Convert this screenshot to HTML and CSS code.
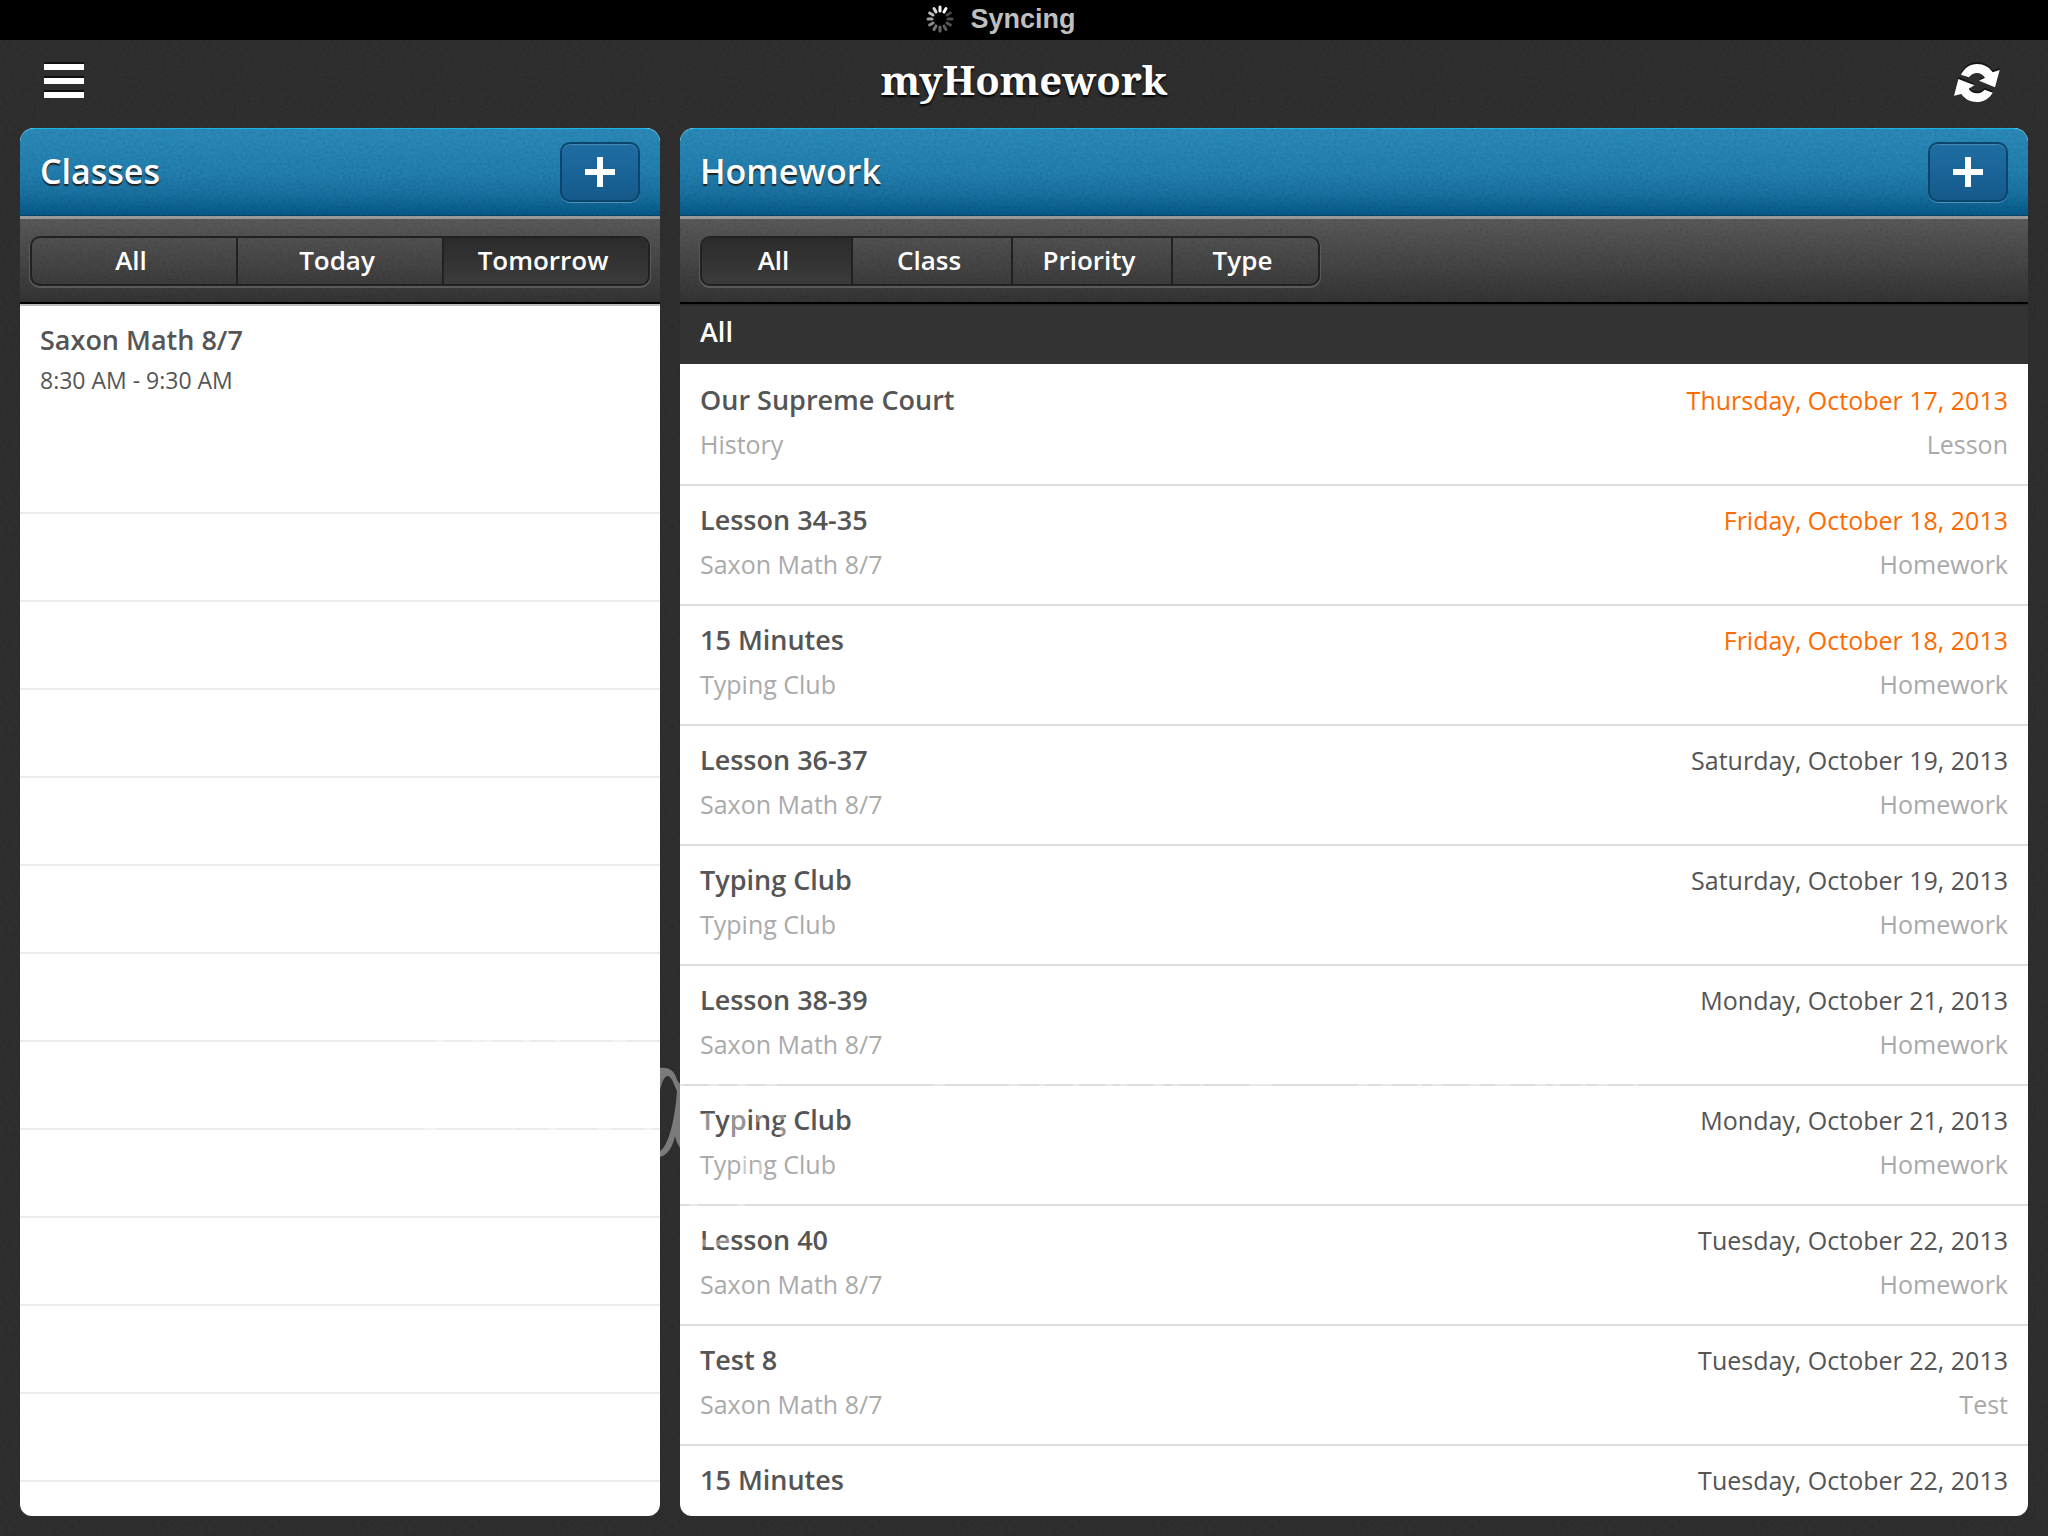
FILE: index.html
```html
<!DOCTYPE html>
<html lang="en">
<head>
<meta charset="utf-8">
<meta name="viewport" content="width=device-width, initial-scale=1">
<title>myHomework</title>
<link rel="stylesheet" href="styles.css">
</head>
<body>
<div class="status" role="status">
  <svg class="spinner" viewBox="-14 -14 28 28" aria-hidden="true">
    <g stroke-width="3" stroke-linecap="round">
      <path stroke="#f4f4f4" d="M0-8V-12"/>
      <path stroke="#fff" d="M0-8V-12" transform="rotate(30)"/>
      <path stroke="#444" d="M0-8V-12" transform="rotate(60)"/>
      <path stroke="#4c4c4c" d="M0-8V-12" transform="rotate(90)"/>
      <path stroke="#555" d="M0-8V-12" transform="rotate(120)"/>
      <path stroke="#5c5c5c" d="M0-8V-12" transform="rotate(150)"/>
      <path stroke="#666" d="M0-8V-12" transform="rotate(180)"/>
      <path stroke="#777" d="M0-8V-12" transform="rotate(210)"/>
      <path stroke="#8a8a8a" d="M0-8V-12" transform="rotate(240)"/>
      <path stroke="#a0a0a0" d="M0-8V-12" transform="rotate(270)"/>
      <path stroke="#bbb" d="M0-8V-12" transform="rotate(300)"/>
      <path stroke="#d8d8d8" d="M0-8V-12" transform="rotate(330)"/>
    </g>
  </svg>
  <span>Syncing</span>
</div>

<header class="topbar">
  <button class="icon-btn" type="button" aria-label="Menu">
    <svg width="40" height="36" viewBox="0 0 40 36" aria-hidden="true">
      <path fill="#111" d="M0 0h40v2H0zM0 14h40v2H0zM0 28h40v2H0z"/>
      <path fill="#fff" d="M0 2h40v6H0zM0 16h40v6H0zM0 30h40v6H0z"/>
    </svg>
  </button>
  <h1 class="logo">myHomework</h1>
  <button class="icon-btn" type="button" aria-label="Sync">
    <svg class="sync" width="50" height="46" viewBox="105 51 150 138" aria-hidden="true">
      <path d="M126 104C136 84 154 72 174 72C194 72 211 81 221 97L242 90L228 142L180 122L198 113C192 104 184 99 174 99C164 99 155 104 150 112Z"/>
      <path d="M118 117L166 136L149 146C155 155 163 160 173 160C183 160 191 156 197 149L221 158C211 176 193 186 173 186C154 186 137 177 127 162L105 167Z"/>
    </svg>
  </button>
</header>

<main class="panels">
  <section class="panel">
    <div class="panel-head">
      <h2>Classes</h2>
      <button class="add" type="button" aria-label="Add class"><svg width="30" height="30" viewBox="0 0 30 30" aria-hidden="true"><path fill="#fff" d="M12 0h6v12h12v6H18v12h-6V18H0v-6h12z"/></svg></button>
    </div>
    <div class="toolbar toolbar-classes">
      <div class="tabs tabs-classes">
        <button type="button">All</button>
        <button type="button">Today</button>
        <button type="button" aria-pressed="true">Tomorrow</button>
      </div>
    </div>
    <ul class="classes">
      <li>
        <h3>Saxon Math 8/7</h3>
        <p>8:30 AM - 9:30 AM</p>
      </li>
    </ul>
    <div class="ruled"></div>
  </section>

  <section class="panel">
    <div class="panel-head">
      <h2>Homework</h2>
      <button class="add" type="button" aria-label="Add homework"><svg width="30" height="30" viewBox="0 0 30 30" aria-hidden="true"><path fill="#fff" d="M12 0h6v12h12v6H18v12h-6V18H0v-6h12z"/></svg></button>
    </div>
    <div class="toolbar">
      <div class="tabs tabs-homework">
        <button type="button" aria-pressed="true">All</button>
        <button type="button">Class</button>
        <button type="button">Priority</button>
        <button type="button">Type</button>
      </div>
    </div>
    <h3 class="group">All</h3>
    <ul class="homework">
      <li><h4>Our Supreme Court</h4><time class="late">Thursday, October 17, 2013</time><p>History</p><p>Lesson</p></li>
      <li><h4>Lesson 34-35</h4><time class="late">Friday, October 18, 2013</time><p>Saxon Math 8/7</p><p>Homework</p></li>
      <li><h4>15 Minutes</h4><time class="late">Friday, October 18, 2013</time><p>Typing Club</p><p>Homework</p></li>
      <li><h4>Lesson 36-37</h4><time>Saturday, October 19, 2013</time><p>Saxon Math 8/7</p><p>Homework</p></li>
      <li><h4>Typing Club</h4><time>Saturday, October 19, 2013</time><p>Typing Club</p><p>Homework</p></li>
      <li><h4>Lesson 38-39</h4><time>Monday, October 21, 2013</time><p>Saxon Math 8/7</p><p>Homework</p></li>
      <li><h4>Typing Club</h4><time>Monday, October 21, 2013</time><p>Typing Club</p><p>Homework</p></li>
      <li><h4>Lesson 40</h4><time>Tuesday, October 22, 2013</time><p>Saxon Math 8/7</p><p>Homework</p></li>
      <li><h4>Test 8</h4><time>Tuesday, October 22, 2013</time><p>Saxon Math 8/7</p><p>Test</p></li>
      <li><h4>15 Minutes</h4><time>Tuesday, October 22, 2013</time></li>
    </ul>
  </section>

  <!-- Translucent white pen marks that run over both panels -->
  <svg class="marks" width="1300" height="220" viewBox="400 1030 1300 220" aria-hidden="true">
    <path d="M660 1068C670 1067 675 1072 677 1080L680 1084V1148Q676 1142 675 1136Q671 1154 660 1157V1151C668 1147 675 1120 677 1091C673 1083 672 1076 667 1076Q663 1077 660 1090Z"/>
    <path d="M435 1039h10v4h-10zM472 1039h9v4h-9zM484 1039h9v4h-9zM522 1039h8v4h-8zM554 1039h7v4h-7zM612 1039h14v4h-14z"/>
    <path d="M425 1127h12v4h-12zM511 1127h4v4h-4zM548 1127h9v4h-9zM598 1127h14v4h-14zM644 1127h9v4h-9z"/>
    <path d="M680 1083h4v4h-4zM708 1083h10v4h-10zM738 1083h9v4h-9zM765 1083h12v4h-12zM933 1083h12v4h-12zM1009 1083h10v4h-10zM1039 1083h6v4h-6zM1073 1083h6v4h-6zM1106 1083h7v4h-7zM1120 1083h7v4h-7zM1154 1083h10v4h-10zM1172 1083h7v4h-7zM1200 1083h4v4h-4zM1250 1083h22v4h-22zM1358 1083h10v4h-10zM1381 1083h11v4h-11zM1417 1083h5v4h-5zM1432 1083h11v4h-11zM1469 1083h11v4h-11zM1495 1083h15v4h-15zM1535 1083h11v4h-11zM1553 1083h7v4h-7zM1581 1083h5v4h-5zM1597 1083h11v4h-11zM1633 1083h5v4h-5z"/>
    <path d="M690 1203h8v4h-8zM738 1203h7v4h-7z"/>
    <path d="M705 1113h9v20h-9zM731 1114h14v24h-14zM757 1112h6v10h-6zM777 1113h8l-1 7h-6zM779 1125h8v12h-6zM740 1156h8v22h-8zM752 1162h9v16h-7zM700 1238q14 6 30-2v7q-14 5-30 3z"/>
  </svg>
</main>
</body>
</html>
```
FILE: styles.css
```css
:root {
  --grain: url("data:image/svg+xml,%3Csvg xmlns='http://www.w3.org/2000/svg' width='200' height='200'%3E%3Cfilter id='n'%3E%3CfeTurbulence type='fractalNoise' baseFrequency='.35' numOctaves='3' stitchTiles='stitch'/%3E%3CfeColorMatrix values='0 0 0 0 0 0 0 0 0 0 0 0 0 0 0 1 0 0 0 -.35'/%3E%3C/filter%3E%3Crect width='200' height='200' filter='url(%23n)' opacity='.2'/%3E%3C/svg%3E");
}

* { box-sizing: border-box; margin: 0; padding: 0; }

body {
  display: flex;
  flex-direction: column;
  height: 100vh;
  overflow: hidden;
  background: var(--grain) #2f2f2f;
  font-family: "Trebuchet MS", "Open Sans", sans-serif;
  color: #555;
}

button { border: 0; background: none; font: inherit; color: inherit; cursor: pointer; }
ul { list-style: none; }

.status {
  display: flex;
  flex: none;
  justify-content: center;
  align-items: center;
  gap: 16px;
  height: 40px;
  padding: 0 46px 2px 0;
  background: #000;
  color: #bfbfbf;
  font: bold 27px/36px "Liberation Sans", sans-serif;
}
.spinner { width: 28px; height: 28px; }

.topbar {
  display: flex;
  flex: none;
  justify-content: space-between;
  align-items: center;
  height: 88px;
  padding: 0 44px 8px;
}
.icon-btn { display: flex; width: 50px; }
.sync { fill: #fff; filter: drop-shadow(0 -2px 0 #151515); }
.logo {
  font: bold 40px/48px "Noto Serif", "DejaVu Serif Condensed", serif;
  color: #fff;
  text-shadow: 0 2px 2px #000;
}

.panels {
  position: relative;
  display: grid;
  flex: 1;
  grid-template-columns: 160fr 337fr;
  gap: 20px;
  min-height: 0;
  padding: 0 20px 20px;
}
.panel {
  display: flex;
  flex-direction: column;
  min-height: 0;
  overflow: hidden;
  border-radius: 14px 14px 12px 12px;
  background: #fff;
}

.panel-head {
  display: flex;
  flex: none;
  justify-content: space-between;
  align-items: center;
  height: 88px;
  padding: 0 20px;
  border-top: 1px solid #16b5e6;
  border-bottom: 1px solid #0a4266;
  border-radius: 14px 14px 0 0;
  background: var(--grain), linear-gradient(#2b8bbb, #2280b0 50%, #1972a2 75%, #045a8a);
  color: #fff;
}
.panel-head h2 { padding-bottom: 2px; font-size: 34px; line-height: 44px; font-weight: 600; text-shadow: 0 2px 1px #222; }
.add {
  display: flex;
  justify-content: center;
  align-items: center;
  width: 80px;
  height: 60px;
  border: 2px solid #0a466c;
  border-radius: 10px;
  background: linear-gradient(#1f6ea4, #15598a);
  box-shadow: 0 1px 0 #4f93bb, inset 0 1px 0 #4588b4;
}

.toolbar {
  flex: none;
  height: 88px;
  padding: 17px 20px 0;
  border-top: 3px solid #999;
  border-bottom: 2px solid #000;
  background: var(--grain), linear-gradient(#5a5a5a, #343434);
}
.toolbar-classes { padding: 17px 10px 0; }
.tabs {
  display: grid;
  overflow: hidden;
  height: 50px;
  border: 2px solid #212121;
  border-radius: 10px;
  box-shadow: 0 1px 0 1px #5a5a5a;
  color: #fff;
  font-size: 26px;
  font-weight: 600;
  line-height: 44px;
  text-shadow: 0 -2px 1px #222;
}
.tabs-classes { grid-template-columns: 102fr 103fr 103fr; }
.tabs-homework { grid-template-columns: 149fr 160fr 160fr 147fr; max-width: 620px; }
.tabs button { padding: 0 6px 2px 0; }
.tabs button + button { border-left: 2px solid #212121; }
.tabs button[aria-pressed="true"] { background: linear-gradient(#2b2b2b, #3b3b3b); }

.classes { flex: none; }
.classes li {
  height: 210px;
  padding: 12px 20px 0;
  border-top: 2px solid #bbb;
  border-bottom: 2px solid #ebebeb;
}
.classes h3 { font-size: 27px; line-height: 44px; font-weight: 600; }
.classes p { font-size: 23px; line-height: 36px; }
.ruled { flex: 1; background: repeating-linear-gradient(transparent 0 86px, #ebebeb 86px 88px); }

.group {
  flex: none;
  padding: 4px 20px 10px;
  border-top: 2px solid #2b2b2b;
  background: #333;
  color: #fff;
  font-size: 27px;
  font-weight: 600;
  line-height: 44px;
}

.homework li {
  display: grid;
  grid-template-columns: 1fr auto;
  height: 120px;
  padding: 12px 20px 18px;
  border-top: 2px solid #ddd;
  font-size: 25px;
  line-height: 44px;
}
.homework li:first-child { border-top-color: #fff; }
.homework h4 { font-size: 27px; line-height: 44px; font-weight: 600; }
.homework time { text-align: right; }
.homework p { color: #aaa; }
.homework p:last-child { text-align: right; }
.homework .late { color: #ff6a00; }

.marks {
  position: absolute;
  top: 902px;
  left: 400px;
  pointer-events: none;
  fill: #fff;
  opacity: .37;
}
```
